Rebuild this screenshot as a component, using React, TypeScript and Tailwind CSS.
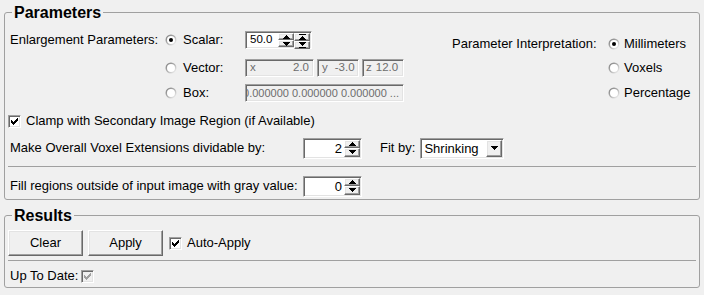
import React from "react";

const sunken =
  "border border-t-[#a0a0a0] border-l-[#a0a0a0] border-b-white border-r-white shadow-[inset_1px_1px_0_#696969,inset_-1px_-1px_0_#e3e3e3]";
const raised =
  "border border-t-white border-l-white border-b-[#696969] border-r-[#696969] shadow-[inset_-1px_-1px_0_#a0a0a0,inset_1px_1px_0_#e3e3e3]";

function TriUp({ color = "#000" }: { color?: string }) {
  return (
    <svg width="7" height="4" viewBox="0 0 7 4" shapeRendering="crispEdges">
      <rect x="3" y="0" width="1" height="1" fill={color} />
      <rect x="2" y="1" width="3" height="1" fill={color} />
      <rect x="1" y="2" width="5" height="1" fill={color} />
      <rect x="0" y="3" width="7" height="1" fill={color} />
    </svg>
  );
}
function TriDown({ color = "#000" }: { color?: string }) {
  return (
    <svg width="7" height="4" viewBox="0 0 7 4" shapeRendering="crispEdges">
      <rect x="0" y="0" width="7" height="1" fill={color} />
      <rect x="1" y="1" width="5" height="1" fill={color} />
      <rect x="2" y="2" width="3" height="1" fill={color} />
      <rect x="3" y="3" width="1" height="1" fill={color} />
    </svg>
  );
}
function FastUp() {
  return (
    <svg width="7" height="6" viewBox="0 0 7 6" shapeRendering="crispEdges">
      <rect x="0" y="0" width="7" height="1" fill="#000" />
      <rect x="3" y="2" width="1" height="1" fill="#000" />
      <rect x="2" y="3" width="3" height="1" fill="#000" />
      <rect x="1" y="4" width="5" height="1" fill="#000" />
      <rect x="0" y="5" width="7" height="1" fill="#000" />
    </svg>
  );
}
function FastDown() {
  return (
    <svg width="7" height="6" viewBox="0 0 7 6" shapeRendering="crispEdges">
      <rect x="0" y="0" width="7" height="1" fill="#000" />
      <rect x="1" y="1" width="5" height="1" fill="#000" />
      <rect x="2" y="2" width="3" height="1" fill="#000" />
      <rect x="3" y="3" width="1" height="1" fill="#000" />
      <rect x="0" y="5" width="7" height="1" fill="#000" />
    </svg>
  );
}

function ArrowCol({ fast = false }: { fast?: boolean }) {
  return (
    <div className="flex flex-col w-[16px] h-full">
      <div className={`flex-1 flex items-center justify-center bg-[#f0f0f0] ${raised}`}>
        {fast ? <FastUp /> : <TriUp />}
      </div>
      <div className={`flex-1 flex items-center justify-center bg-[#f0f0f0] ${raised}`}>
        {fast ? <FastDown /> : <TriDown />}
      </div>
    </div>
  );
}

function Radio({ checked = false }: { checked?: boolean }) {
  return (
    <svg width="12" height="12" viewBox="0 0 12 12">
      <defs>
        <linearGradient id="rg" x1="0" y1="0" x2="1" y2="1">
          <stop offset="0" stopColor="#7a7a7a" />
          <stop offset="0.5" stopColor="#b0b0b0" />
          <stop offset="1" stopColor="#ffffff" />
        </linearGradient>
      </defs>
      <circle cx="6" cy="6" r="5.5" fill="url(#rg)" />
      <circle cx="6" cy="6" r="4" fill="#fff" />
      {checked && <circle cx="6" cy="6" r="2" fill="#000" />}
    </svg>
  );
}

function Check({ disabled = false }: { disabled?: boolean }) {
  const c = disabled ? "#a0a0a0" : "#000";
  return (
    <div
      className={`w-[13px] h-[13px] shrink-0 flex items-center justify-center ${sunken} ${
        disabled ? "bg-[#f0f0f0]" : "bg-white"
      }`}
    >
      <svg width="7" height="7" viewBox="0 0 7 7" shapeRendering="crispEdges">
        <rect x="6" y="0" width="1" height="3" fill={c} />
        <rect x="5" y="1" width="1" height="3" fill={c} />
        <rect x="4" y="2" width="1" height="3" fill={c} />
        <rect x="3" y="3" width="1" height="3" fill={c} />
        <rect x="2" y="4" width="1" height="3" fill={c} />
        <rect x="1" y="3" width="1" height="3" fill={c} />
        <rect x="0" y="2" width="1" height="3" fill={c} />
      </svg>
    </div>
  );
}

function IntSpin({ value }: { value: string }) {
  return (
    <div className={`w-[59px] h-[21px] bg-white flex items-stretch p-[1px] ${sunken}`}>
      <div className="flex-1 flex items-center justify-end pr-[2px] leading-none">{value}</div>
      <ArrowCol />
    </div>
  );
}

function Sep() {
  return <div className="mx-[3px] border-t border-[#a0a0a0]" />;
}

export default function App() {
  return (
    <div className="w-[704px] h-[295px] bg-[#f0f0f0] text-[13px] text-black overflow-hidden font-['Liberation_Sans',Arial,sans-serif] leading-[16px]">
      <div className="pt-[3px] px-[4px]">
        <fieldset className="border border-[#a0a0a0] rounded-[3px] w-[696px] pb-[1px]">
          <legend className="ml-[7px] px-[2px] text-[16px] font-bold leading-[19px]">Parameters</legend>

          <div className="flex pt-[5px]">
            <div className="w-[447px] pl-[5px]">
              <div className="flex items-center h-[26px]">
                <div className="w-[155px]">Enlargement Parameters:</div>
                <div className="w-[80px] flex items-center gap-[6px]">
                  <Radio checked />
                  <span>Scalar:</span>
                </div>
                <div className={`w-[67px] h-[18px] bg-white flex items-stretch p-[1px] ${sunken}`}>
                  <div className="flex-1 flex items-center pl-[3px] leading-none text-[11.5px]">50.0</div>
                  <ArrowCol />
                  <ArrowCol fast />
                </div>
              </div>
              <div className="flex items-center h-[24px] mt-[3px]">
                <div className="w-[155px]" />
                <div className="w-[80px] flex items-center gap-[6px]">
                  <Radio />
                  <span>Vector:</span>
                </div>
                <div className="flex gap-[3px] text-[#6d6d6d] text-[11.5px]">
                  <div className={`w-[69px] h-[18px] flex items-center justify-between px-[4px] leading-none ${sunken}`}>
                    <span>x</span>
                    <span>2.0</span>
                  </div>
                  <div className={`w-[42px] h-[18px] flex items-center gap-[7px] px-[4px] leading-none ${sunken}`}>
                    <span>y</span>
                    <span>-3.0</span>
                  </div>
                  <div className={`w-[42px] h-[18px] flex items-center gap-[4px] px-[3px] leading-none ${sunken}`}>
                    <span>z</span>
                    <span>12.0</span>
                  </div>
                </div>
              </div>
              <div className="flex items-center h-[24px] mt-[1px]">
                <div className="w-[155px]" />
                <div className="w-[80px] flex items-center gap-[6px]">
                  <Radio />
                  <span>Box:</span>
                </div>
                <div
                  className={`w-[159px] h-[18px] flex items-center justify-end overflow-hidden whitespace-nowrap pr-[4px] leading-none text-[#6d6d6d] text-[11px] ${sunken}`}
                >
                  <span className="shrink-0">0.000000 0.000000 0.000000 ...</span>
                </div>
              </div>
            </div>

            <div className="pt-[5px]">
              <div className="flex items-center h-[24px]">
                <div className="w-[156px]">Parameter Interpretation:</div>
                <div className="flex items-center gap-[4px]">
                  <Radio checked />
                  <span>Millimeters</span>
                </div>
              </div>
              <div className="flex items-center h-[24px]">
                <div className="w-[156px]" />
                <div className="flex items-center gap-[4px]">
                  <Radio />
                  <span>Voxels</span>
                </div>
              </div>
              <div className="flex items-center h-[24px] mt-[1px]">
                <div className="w-[156px]" />
                <div className="flex items-center gap-[4px]">
                  <Radio />
                  <span>Percentage</span>
                </div>
              </div>
            </div>
          </div>

          <div className="flex items-center h-[24px] mt-[4px] pl-[3px] gap-[5px]">
            <Check />
            <span>Clamp with Secondary Image Region (if Available)</span>
          </div>

          <div className="flex items-center h-[24px] mt-[3px] pl-[5px]">
            <div className="w-[293px]">Make Overall Voxel Extensions dividable by:</div>
            <IntSpin value="2" />
            <span className="ml-[18px]">Fit by:</span>
            <div className={`ml-[5px] w-[84px] h-[21px] bg-white flex items-stretch p-[1px] ${sunken}`}>
              <div className="flex-1 flex items-center pl-[2px] leading-none">Shrinking</div>
              <div className={`w-[16px] flex items-center justify-center bg-[#f0f0f0] ${raised}`}>
                <TriDown />
              </div>
            </div>
          </div>

          <div className="mt-[6px]">
            <Sep />
          </div>

          <div className="flex items-center h-[24px] mt-[7px] pl-[5px]">
            <div className="w-[293px]">Fill regions outside of input image with gray value:</div>
            <IntSpin value="0" />
          </div>
        </fieldset>

        <fieldset className="mt-[6px] border border-[#a0a0a0] rounded-[3px] w-[696px]">
          <legend className="ml-[7px] px-[2px] text-[16px] font-bold leading-[19px]">Results</legend>
          <div className="flex items-center pt-[5px] pl-[3px]">
            <div className={`w-[75px] h-[26px] flex items-center justify-center bg-[#f0f0f0] ${raised}`}>Clear</div>
            <div className={`ml-[5px] w-[75px] h-[26px] flex items-center justify-center bg-[#f0f0f0] ${raised}`}>Apply</div>
            <div className="ml-[6px]">
              <Check />
            </div>
            <span className="ml-[5px]">Auto-Apply</span>
          </div>
          <div className="mt-[4px]">
            <Sep />
          </div>
          <div className="flex items-center h-[22px] mt-[4px] pl-[5px]">
            <span>Up To Date:</span>
            <div className="ml-[3px]">
              <Check disabled />
            </div>
          </div>
        </fieldset>
      </div>
    </div>
  );
}
